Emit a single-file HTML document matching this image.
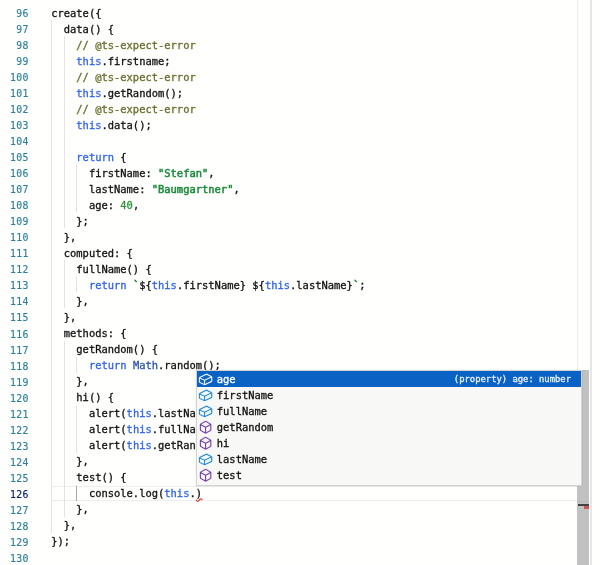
<!DOCTYPE html>
<html><head><meta charset="utf-8"><title>editor</title>
<style>
html,body{margin:0;padding:0;}
body{width:600px;height:565px;background:#fffffe;overflow:hidden;position:relative;
 font-family:"DejaVu Sans Mono", "Liberation Mono", monospace;font-size:10.44px;line-height:16px;color:#111;-webkit-text-stroke:0.3px;}
#ed{position:absolute;left:0;top:0;width:600px;height:565px;will-change:transform;}
.ln{position:absolute;left:0;width:28.9px;text-align:right;color:#2b7f9c;white-space:pre;height:16px;font-size:9.8px;letter-spacing:0.38px;-webkit-text-stroke:0.15px;}
.ln.cur{color:#0b216f;}
.cl{position:absolute;white-space:pre;height:16px;}
.k{color:#3265ea;}
.c{color:#6a6d2c;}
.s{color:#1c8a3c;-webkit-text-stroke:0.5px;}
.n{color:#2e9138;}
.t{color:#2a55aa;}
.g{position:absolute;width:1.4px;background:#e3e3e3;}
.g.act{background:#a6a6a6;}
.v1{position:absolute;left:577px;top:0;width:1px;height:565px;background:#ececec;}
.v2{position:absolute;left:590px;top:0;width:2px;height:565px;background:#e6e6e6;}
.curline{position:absolute;left:52px;top:485.5px;width:525px;height:13.5px;border:1px solid #eeeeee;border-left:none;border-right:none}
.sb{position:absolute;background:#c1c1c1;}
.sw{position:absolute;left:196px;top:370px;width:384px;height:113.5px;background:#f8f8f7;border:1px solid #d4d2d0;box-sizing:content-box;box-shadow:0 0 2px rgba(0,0,0,0.10);}
.row{position:absolute;left:0;width:384px;height:16px;white-space:pre;}
.row.sel{background:#0a63c4;color:#fff;}
.row svg{position:absolute;left:0.9px;top:1.0px;width:15.2px;height:14.7px;}
.row .lb{position:absolute;left:19.8px;top:0;}
.row .dt{position:absolute;right:10px;top:0;font-size:8.85px;color:#e8f0fb;}
</style></head><body><div id="ed">
<div class="v1"></div><div class="v2"></div>
<div class="curline"></div>
<div class="g" style="left:51.10px;top:20.0px;height:512.768px"></div>
<div class="g" style="left:63.90px;top:36.0px;height:192.288px"></div>
<div class="g" style="left:63.90px;top:260.4px;height:48.072px"></div>
<div class="g" style="left:63.90px;top:340.5px;height:176.264px"></div>
<div class="g" style="left:76.10px;top:164.2px;height:48.072px"></div>
<div class="g" style="left:76.10px;top:276.4px;height:16.024px"></div>
<div class="g" style="left:76.10px;top:356.5px;height:16.024px"></div>
<div class="g" style="left:76.10px;top:404.6px;height:48.072px"></div>
<div class="g" style="left:76.10px;top:484.7px;height:16.024px"></div>
<div class="g act" style="left:76.1px;top:486.2px;height:15px"></div>
<div class="ln" style="top:5.90px">96</div><div class="cl" style="left:51.20px;top:4.50px">create({</div>
<div class="ln" style="top:21.93px">97</div><div class="cl" style="left:63.76px;top:20.52px">data() {</div>
<div class="ln" style="top:37.96px">98</div><div class="cl" style="left:76.32px;top:36.55px"><span class="c">// @ts-expect-error</span></div>
<div class="ln" style="top:53.99px">99</div><div class="cl" style="left:76.32px;top:52.57px"><span class="k">this</span>.firstname;</div>
<div class="ln" style="top:70.02px">100</div><div class="cl" style="left:76.32px;top:68.60px"><span class="c">// @ts-expect-error</span></div>
<div class="ln" style="top:86.05px">101</div><div class="cl" style="left:76.32px;top:84.62px"><span class="k">this</span>.getRandom();</div>
<div class="ln" style="top:102.08px">102</div><div class="cl" style="left:76.32px;top:100.64px"><span class="c">// @ts-expect-error</span></div>
<div class="ln" style="top:118.11px">103</div><div class="cl" style="left:76.32px;top:116.67px"><span class="k">this</span>.data();</div>
<div class="ln" style="top:134.14px">104</div>
<div class="ln" style="top:150.17px">105</div><div class="cl" style="left:76.32px;top:148.72px"><span class="k">return</span> {</div>
<div class="ln" style="top:166.20px">106</div><div class="cl" style="left:88.88px;top:164.74px">firstName: <span class="s">"Stefan"</span>,</div>
<div class="ln" style="top:182.23px">107</div><div class="cl" style="left:88.88px;top:180.76px">lastName: <span class="s">"Baumgartner"</span>,</div>
<div class="ln" style="top:198.26px">108</div><div class="cl" style="left:88.88px;top:196.79px">age: <span class="n">40</span>,</div>
<div class="ln" style="top:214.29px">109</div><div class="cl" style="left:76.32px;top:212.81px">};</div>
<div class="ln" style="top:230.32px">110</div><div class="cl" style="left:63.76px;top:228.84px">},</div>
<div class="ln" style="top:246.35px">111</div><div class="cl" style="left:63.76px;top:244.86px">computed: {</div>
<div class="ln" style="top:262.38px">112</div><div class="cl" style="left:76.32px;top:260.88px">fullName() {</div>
<div class="ln" style="top:278.41px">113</div><div class="cl" style="left:88.88px;top:276.91px"><span class="k">return</span> <span class="s">`</span>${<span class="k">this</span>.firstName} ${<span class="k">this</span>.lastName}<span class="s">`</span>;</div>
<div class="ln" style="top:294.44px">114</div><div class="cl" style="left:76.32px;top:292.93px">},</div>
<div class="ln" style="top:310.47px">115</div><div class="cl" style="left:63.76px;top:308.96px">},</div>
<div class="ln" style="top:326.50px">116</div><div class="cl" style="left:63.76px;top:324.98px">methods: {</div>
<div class="ln" style="top:342.53px">117</div><div class="cl" style="left:76.32px;top:341.00px">getRandom() {</div>
<div class="ln" style="top:358.56px">118</div><div class="cl" style="left:88.88px;top:357.03px"><span class="k">return</span> <span class="t">Math</span>.random();</div>
<div class="ln" style="top:374.59px">119</div><div class="cl" style="left:76.32px;top:373.05px">},</div>
<div class="ln" style="top:390.62px">120</div><div class="cl" style="left:76.32px;top:389.08px">hi() {</div>
<div class="ln" style="top:406.65px">121</div><div class="cl" style="left:88.88px;top:405.10px">alert(<span class="k">this</span>.lastName);</div>
<div class="ln" style="top:422.68px">122</div><div class="cl" style="left:88.88px;top:421.12px">alert(<span class="k">this</span>.fullName);</div>
<div class="ln" style="top:438.71px">123</div><div class="cl" style="left:88.88px;top:437.15px">alert(<span class="k">this</span>.getRandom());</div>
<div class="ln" style="top:454.74px">124</div><div class="cl" style="left:76.32px;top:453.17px">},</div>
<div class="ln" style="top:470.77px">125</div><div class="cl" style="left:76.32px;top:469.20px">test() {</div>
<div class="ln cur" style="top:486.80px">126</div><div class="cl" style="left:88.88px;top:485.22px">console.log(<span class="k">this</span>.)</div>
<div class="ln" style="top:502.83px">127</div><div class="cl" style="left:76.32px;top:501.24px">},</div>
<div class="ln" style="top:518.86px">128</div><div class="cl" style="left:63.76px;top:517.27px">},</div>
<div class="ln" style="top:534.89px">129</div><div class="cl" style="left:51.20px;top:533.29px">});</div>
<div class="ln" style="top:550.92px">130</div>
<div class="sb" style="left:581px;top:370px;width:8px;height:116px"></div>
<div class="sb" style="left:577px;top:486px;width:12px;height:79px"></div>
<div style="position:absolute;left:577px;top:500.5px;width:12px;height:1px;background:#b9b9b9"></div>
<div style="position:absolute;left:578px;top:504px;width:11px;height:2px;background:#444"></div>
<div style="position:absolute;left:584px;top:506px;width:5px;height:3px;background:#cc5555"></div>
<div class="sw">
<div class="row sel" style="top:0px"><svg viewBox="0 0 16 16" preserveAspectRatio="none"><path fill="#ffffff" stroke="#ffffff" stroke-width="0.15" fill-rule="evenodd" clip-rule="evenodd" d="M14.45 4.5l-5-2.5h-.9l-7 3.5-.55.89v4.5l.55.9 5 2.5h.9l7-3.5.55-.9v-4.5l-.55-.89zm-8 8.64l-4.5-2.25V7.17l4.5 2v3.97zm.5-4.8L2.29 6.23l6.66-3.34 4.45 2.23-6.45 3.22zm7 1.55l-6.5 3.25V9.21l6.5-3.25v3.93z"/></svg><span class="lb">age</span><span class="dt">(property) age: number</span></div>
<div class="row" style="top:16px"><svg viewBox="0 0 16 16" preserveAspectRatio="none"><path fill="#1a85d6" stroke="#1a85d6" stroke-width="0.15" fill-rule="evenodd" clip-rule="evenodd" d="M14.45 4.5l-5-2.5h-.9l-7 3.5-.55.89v4.5l.55.9 5 2.5h.9l7-3.5.55-.9v-4.5l-.55-.89zm-8 8.64l-4.5-2.25V7.17l4.5 2v3.97zm.5-4.8L2.29 6.23l6.66-3.34 4.45 2.23-6.45 3.22zm7 1.55l-6.5 3.25V9.21l6.5-3.25v3.93z"/></svg><span class="lb">firstName</span></div>
<div class="row" style="top:32px"><svg viewBox="0 0 16 16" preserveAspectRatio="none"><path fill="#1a85d6" stroke="#1a85d6" stroke-width="0.15" fill-rule="evenodd" clip-rule="evenodd" d="M14.45 4.5l-5-2.5h-.9l-7 3.5-.55.89v4.5l.55.9 5 2.5h.9l7-3.5.55-.9v-4.5l-.55-.89zm-8 8.64l-4.5-2.25V7.17l4.5 2v3.97zm.5-4.8L2.29 6.23l6.66-3.34 4.45 2.23-6.45 3.22zm7 1.55l-6.5 3.25V9.21l6.5-3.25v3.93z"/></svg><span class="lb">fullName</span></div>
<div class="row" style="top:48px"><svg viewBox="0 0 16 16" preserveAspectRatio="none"><path fill="#6b35a0" stroke="#6b35a0" stroke-width="0.15" fill-rule="evenodd" clip-rule="evenodd" d="M13.51 4l-5-3h-1l-5 3-.49.86v6l.49.85 5 3h1l5-3 .49-.85v-6L13.51 4zm-6 9.56l-4.5-2.7V5.7l4.5 2.45v5.41zM3.27 4.7l4.74-2.84 4.74 2.84-4.74 2.59L3.27 4.7zm9.74 6.16l-4.5 2.7V8.15l4.5-2.45v5.16z"/></svg><span class="lb">getRandom</span></div>
<div class="row" style="top:64px"><svg viewBox="0 0 16 16" preserveAspectRatio="none"><path fill="#6b35a0" stroke="#6b35a0" stroke-width="0.15" fill-rule="evenodd" clip-rule="evenodd" d="M13.51 4l-5-3h-1l-5 3-.49.86v6l.49.85 5 3h1l5-3 .49-.85v-6L13.51 4zm-6 9.56l-4.5-2.7V5.7l4.5 2.45v5.41zM3.27 4.7l4.74-2.84 4.74 2.84-4.74 2.59L3.27 4.7zm9.74 6.16l-4.5 2.7V8.15l4.5-2.45v5.16z"/></svg><span class="lb">hi</span></div>
<div class="row" style="top:80px"><svg viewBox="0 0 16 16" preserveAspectRatio="none"><path fill="#1a85d6" stroke="#1a85d6" stroke-width="0.15" fill-rule="evenodd" clip-rule="evenodd" d="M14.45 4.5l-5-2.5h-.9l-7 3.5-.55.89v4.5l.55.9 5 2.5h.9l7-3.5.55-.9v-4.5l-.55-.89zm-8 8.64l-4.5-2.25V7.17l4.5 2v3.97zm.5-4.8L2.29 6.23l6.66-3.34 4.45 2.23-6.45 3.22zm7 1.55l-6.5 3.25V9.21l6.5-3.25v3.93z"/></svg><span class="lb">lastName</span></div>
<div class="row" style="top:96px"><svg viewBox="0 0 16 16" preserveAspectRatio="none"><path fill="#6b35a0" stroke="#6b35a0" stroke-width="0.15" fill-rule="evenodd" clip-rule="evenodd" d="M13.51 4l-5-3h-1l-5 3-.49.86v6l.49.85 5 3h1l5-3 .49-.85v-6L13.51 4zm-6 9.56l-4.5-2.7V5.7l4.5 2.45v5.41zM3.27 4.7l4.74-2.84 4.74 2.84-4.74 2.59L3.27 4.7zm9.74 6.16l-4.5 2.7V8.15l4.5-2.45v5.16z"/></svg><span class="lb">test</span></div>
</div>
<svg style="position:absolute;left:195px;top:497px" width="9" height="6" viewBox="0 0 9 6"><path d="M1.2 3.1 C1.9 4.6 3.2 4.6 4 3.4 S5.8 1.2 7 2.5" fill="none" stroke="#e03c34" stroke-width="1.25" stroke-linecap="round"/></svg>
</div></body></html>
